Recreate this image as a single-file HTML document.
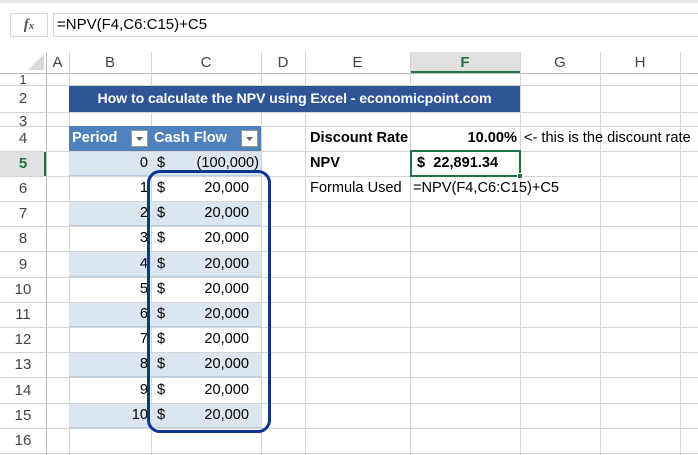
<!DOCTYPE html>
<html><head><meta charset="utf-8"><style>
*{margin:0;padding:0;box-sizing:border-box}
body{width:698px;height:455px;overflow:hidden;background:#fff;font-family:"Liberation Sans",Arial,sans-serif;position:relative;color:#000}
.a{position:absolute}
.hl{position:absolute;height:1px;background:#d4d4d4}
.vl{position:absolute;width:1px;background:#d4d4d4}
.rh{position:absolute;left:0;width:46px;text-align:center;font-size:15px;color:#444}
.ch{position:absolute;top:52px;height:21px;text-align:center;font-size:15px;color:#444;line-height:21px}
.cell{position:absolute;font-size:14.6px;line-height:25px;white-space:nowrap}
</style></head><body>
<div class="a" style="left:0;top:0;width:698px;height:3px;background:#e6e6e6"></div>
<div class="a" style="left:10px;top:13px;width:38px;height:24px;border:1px solid #d8d8d8;font-family:'Liberation Serif',serif;font-style:italic;font-weight:bold;font-size:15px;color:#555;text-align:center;line-height:22px">f<span style="font-size:11px">x</span></div>
<div class="a" style="left:53px;top:13px;width:650px;height:24px;border:1px solid #d8d8d8;font-size:15px;line-height:22px;padding-left:3px">=NPV(F4,C6:C15)+C5</div>

<div class="a" style="left:410px;top:52px;width:110px;height:21px;background:#e1e1e1;border-bottom:2px solid #217346"></div>
<svg class="a" style="left:28px;top:54px" width="16" height="16"><polygon points="16,0 16,16 0,16" fill="#dadada"/></svg>
<div class="ch" style="left:46px;width:23px">A</div>
<div class="ch" style="left:69px;width:82px">B</div>
<div class="ch" style="left:151px;width:110px">C</div>
<div class="ch" style="left:261px;width:44px">D</div>
<div class="ch" style="left:305px;width:105px">E</div>
<div class="ch" style="left:410px;width:110px;color:#217346;font-weight:bold">F</div>
<div class="ch" style="left:520px;width:80px">G</div>
<div class="ch" style="left:600px;width:80px">H</div>
<div class="hl" style="left:0;top:73px;width:698px;background:#bbb"></div>

<div class="vl" style="left:46px;top:52px;height:403px;background:#bbb"></div>
<div class="vl" style="left:69px;top:52px;height:403px"></div>
<div class="vl" style="left:151px;top:52px;height:403px"></div>
<div class="vl" style="left:261px;top:52px;height:403px"></div>
<div class="vl" style="left:305px;top:52px;height:403px"></div>
<div class="vl" style="left:410px;top:52px;height:403px"></div>
<div class="vl" style="left:520px;top:52px;height:403px"></div>
<div class="vl" style="left:600px;top:52px;height:403px"></div>
<div class="vl" style="left:680px;top:52px;height:403px"></div>
<div class="hl" style="left:0;top:85px;width:698px"></div>
<div class="hl" style="left:0;top:112px;width:698px"></div>
<div class="hl" style="left:0;top:126px;width:698px"></div>
<div class="hl" style="left:0;top:151px;width:698px"></div>
<div class="hl" style="left:0;top:176px;width:698px"></div>
<div class="hl" style="left:0;top:201px;width:698px"></div>
<div class="hl" style="left:0;top:226px;width:698px"></div>
<div class="hl" style="left:0;top:251px;width:698px"></div>
<div class="hl" style="left:0;top:277px;width:698px"></div>
<div class="hl" style="left:0;top:302px;width:698px"></div>
<div class="hl" style="left:0;top:327px;width:698px"></div>
<div class="hl" style="left:0;top:352px;width:698px"></div>
<div class="hl" style="left:0;top:377px;width:698px"></div>
<div class="hl" style="left:0;top:403px;width:698px"></div>
<div class="hl" style="left:0;top:428px;width:698px"></div>
<div class="hl" style="left:0;top:453px;width:698px"></div>

<div class="rh" style="top:74px;height:11px;line-height:11px;overflow:hidden;font-size:13px">1</div>
<div class="rh" style="top:86px;line-height:26px">2</div>
<div class="rh" style="top:113px;height:13px;line-height:18px;overflow:hidden">3</div>
<div class="rh" style="top:127px;line-height:24px">4</div>
<div class="a" style="left:0;top:152px;width:46px;height:24px;background:#e1e1e1;border-right:2px solid #217346"></div>
<div class="rh" style="top:152px;line-height:24px;color:#217346;font-weight:bold">5</div>
<div class="rh" style="top:177px;line-height:24px">6</div>
<div class="rh" style="top:202px;line-height:24px">7</div>
<div class="rh" style="top:227px;line-height:24px">8</div>
<div class="rh" style="top:252px;line-height:25px">9</div>
<div class="rh" style="top:278px;line-height:24px">10</div>
<div class="rh" style="top:303px;line-height:24px">11</div>
<div class="rh" style="top:328px;line-height:24px">12</div>
<div class="rh" style="top:353px;line-height:24px">13</div>
<div class="rh" style="top:378px;line-height:25px">14</div>
<div class="rh" style="top:404px;line-height:24px">15</div>
<div class="rh" style="top:429px;line-height:24px">16</div>

<div class="a" style="left:69px;top:86px;width:451px;height:26px;background:#2f5597;color:#fff;font-weight:bold;font-size:14.2px;text-align:center;line-height:26px;letter-spacing:-0.1px">How to calculate the NPV using Excel - economicpoint.com</div>

<div class="a" style="left:69px;top:126px;width:192px;height:25px;background:#4f81bd"></div>
<div class="cell" style="left:72px;top:126px;color:#fff;font-weight:bold">Period</div>
<div class="a" style="left:131px;top:130px;width:17px;height:17px;background:#fff;border:1px solid #999"><svg width="15" height="15"><polygon points="4,6 11,6 7.5,10" fill="#666"/></svg></div>
<div class="cell" style="left:154px;top:126px;color:#fff;font-weight:bold">Cash Flow</div>
<div class="a" style="left:241px;top:130px;width:17px;height:17px;background:#fff;border:1px solid #999"><svg width="15" height="15"><polygon points="4,6 11,6 7.5,10" fill="#666"/></svg></div>

<div class="a" style="left:69px;top:152px;width:192px;height:24px;background:#dce6f1;border-bottom:1px solid #b8cce4"></div>
<div class="a" style="left:69px;top:202px;width:192px;height:24px;background:#dce6f1;border-bottom:1px solid #b8cce4"></div>
<div class="a" style="left:69px;top:252px;width:192px;height:25px;background:#dce6f1;border-bottom:1px solid #b8cce4"></div>
<div class="a" style="left:69px;top:303px;width:192px;height:24px;background:#dce6f1;border-bottom:1px solid #b8cce4"></div>
<div class="a" style="left:69px;top:353px;width:192px;height:24px;background:#dce6f1;border-bottom:1px solid #b8cce4"></div>
<div class="a" style="left:69px;top:404px;width:192px;height:24px;background:#dce6f1;border-bottom:1px solid #b8cce4"></div>

<div class="cell" style="left:69px;width:79px;text-align:right;top:151px">0</div>
<div class="cell" style="left:157px;top:151px">$</div>
<div class="cell" style="left:151px;width:108px;text-align:right;top:151px">(100,000)</div>

<div class="cell" style="left:69px;width:79px;text-align:right;top:176px">1</div>
<div class="cell" style="left:157px;top:176px">$</div><div class="cell" style="left:151px;width:98px;text-align:right;top:176px">20,000</div>
<div class="cell" style="left:69px;width:79px;text-align:right;top:201px">2</div>
<div class="cell" style="left:157px;top:201px">$</div><div class="cell" style="left:151px;width:98px;text-align:right;top:201px">20,000</div>
<div class="cell" style="left:69px;width:79px;text-align:right;top:226px">3</div>
<div class="cell" style="left:157px;top:226px">$</div><div class="cell" style="left:151px;width:98px;text-align:right;top:226px">20,000</div>
<div class="cell" style="left:69px;width:79px;text-align:right;top:252px">4</div>
<div class="cell" style="left:157px;top:252px">$</div><div class="cell" style="left:151px;width:98px;text-align:right;top:252px">20,000</div>
<div class="cell" style="left:69px;width:79px;text-align:right;top:277px">5</div>
<div class="cell" style="left:157px;top:277px">$</div><div class="cell" style="left:151px;width:98px;text-align:right;top:277px">20,000</div>
<div class="cell" style="left:69px;width:79px;text-align:right;top:302px">6</div>
<div class="cell" style="left:157px;top:302px">$</div><div class="cell" style="left:151px;width:98px;text-align:right;top:302px">20,000</div>
<div class="cell" style="left:69px;width:79px;text-align:right;top:327px">7</div>
<div class="cell" style="left:157px;top:327px">$</div><div class="cell" style="left:151px;width:98px;text-align:right;top:327px">20,000</div>
<div class="cell" style="left:69px;width:79px;text-align:right;top:352px">8</div>
<div class="cell" style="left:157px;top:352px">$</div><div class="cell" style="left:151px;width:98px;text-align:right;top:352px">20,000</div>
<div class="cell" style="left:69px;width:79px;text-align:right;top:378px">9</div>
<div class="cell" style="left:157px;top:378px">$</div><div class="cell" style="left:151px;width:98px;text-align:right;top:378px">20,000</div>
<div class="cell" style="left:69px;width:79px;text-align:right;top:403px">10</div>
<div class="cell" style="left:157px;top:403px">$</div><div class="cell" style="left:151px;width:98px;text-align:right;top:403px">20,000</div>

<div class="a" style="left:147px;top:170px;width:124px;height:263px;border:3px solid #0d3593;border-radius:13px"></div>

<div class="cell" style="left:310px;top:126px;font-weight:bold">Discount Rate</div>
<div class="cell" style="left:410px;width:107px;text-align:right;top:126px;font-weight:bold">10.00%</div>
<div class="cell" style="left:524px;top:126px">&lt;- this is the discount rate</div>
<div class="cell" style="left:310px;top:151px;font-weight:bold">NPV</div>
<div class="a" style="left:410px;top:150px;width:111px;height:27px;border:2px solid #217346"></div>
<div class="a" style="left:517px;top:173px;width:6px;height:6px;background:#217346;border:1px solid #fff"></div>
<div class="cell" style="left:417px;top:151px;font-weight:bold">$&nbsp;&nbsp;22,891.34</div>
<div class="cell" style="left:310px;top:176px">Formula Used</div>
<div class="cell" style="left:413px;top:176px">=NPV(F4,C6:C15)+C5</div>
</body></html>
